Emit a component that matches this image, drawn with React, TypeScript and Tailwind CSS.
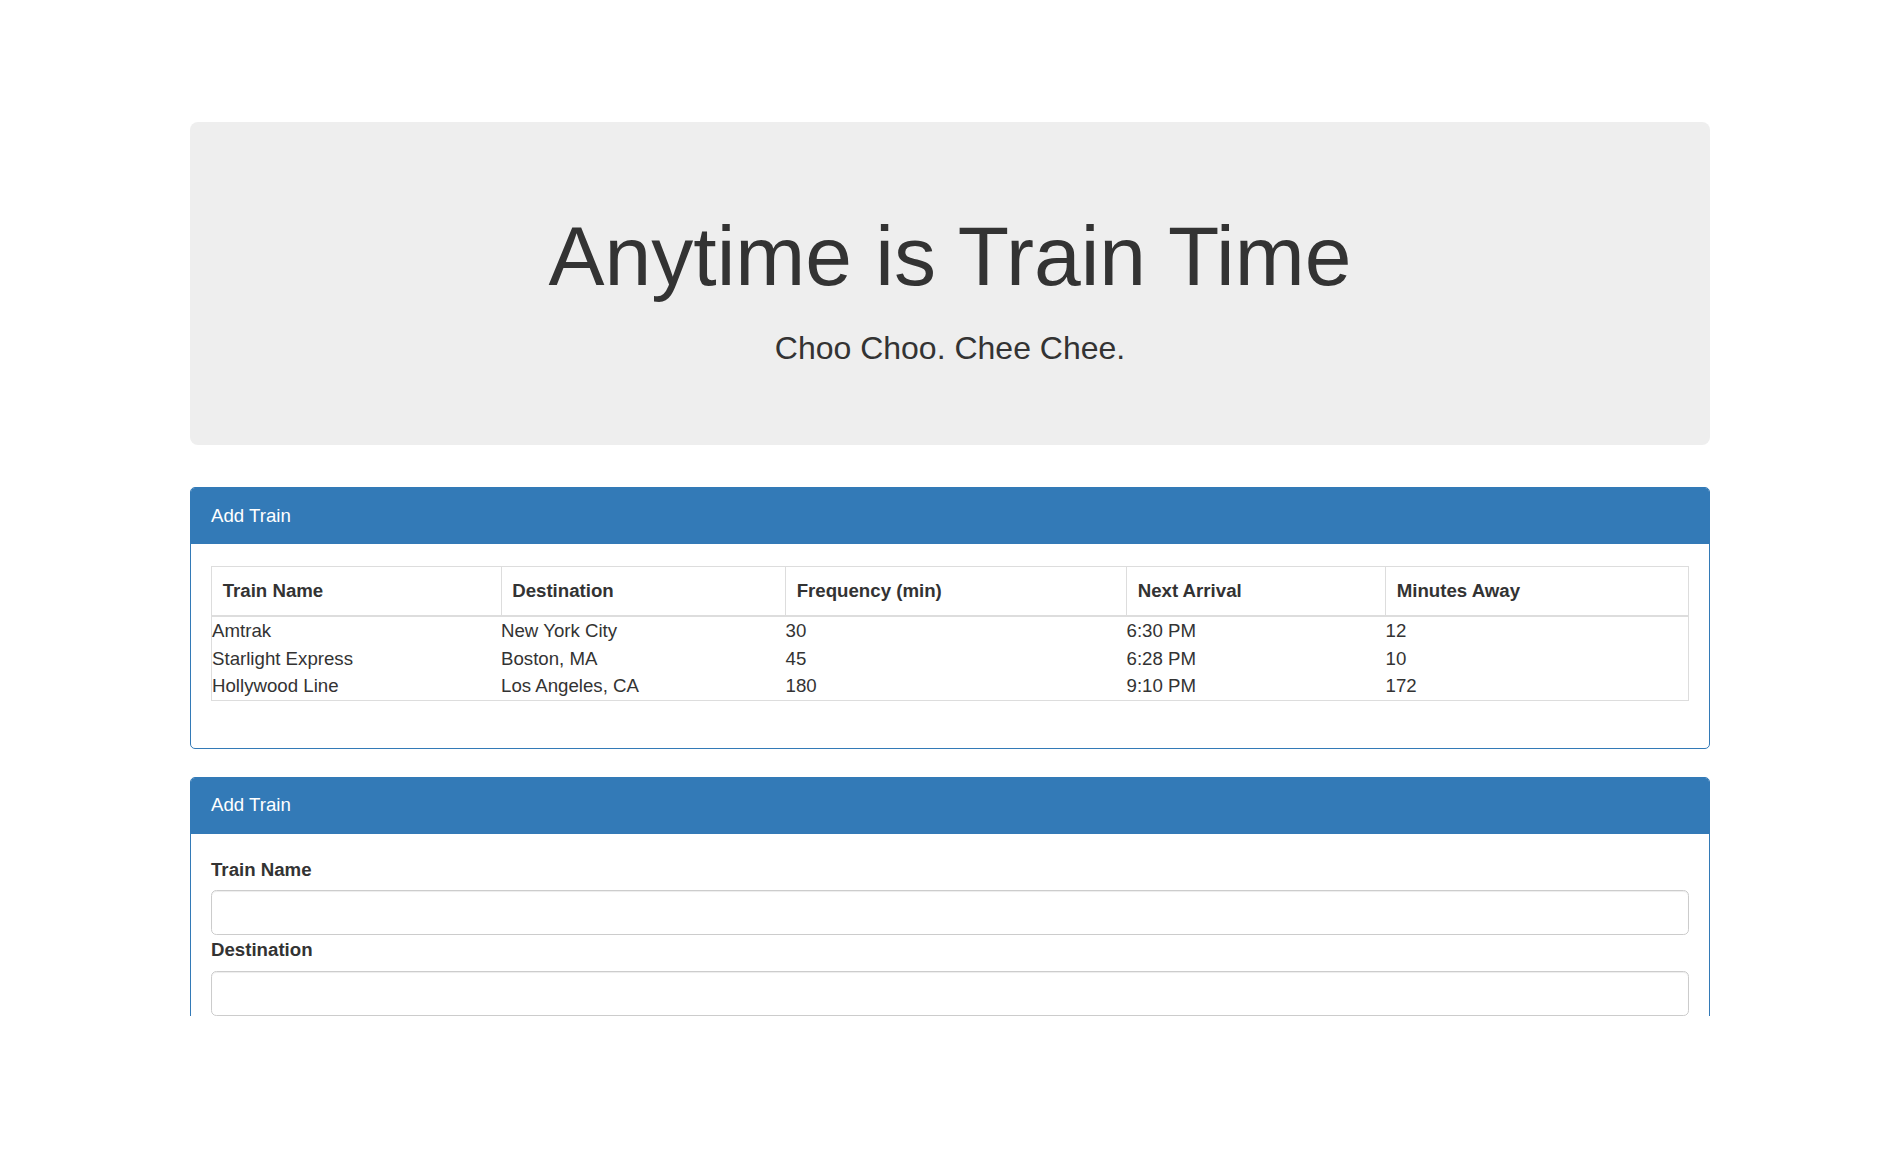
import React from "react";

const rows = [
  ["Amtrak", "New York City", "30", "6:30 PM", "12"],
  ["Starlight Express", "Boston, MA", "45", "6:28 PM", "10"],
  ["Hollywood Line", "Los Angeles, CA", "180", "9:10 PM", "172"],
];

const headers = ["Train Name", "Destination", "Frequency (min)", "Next Arrival", "Minutes Away"];

function PanelHeading() {
  return (
    <div className="h-[56px] bg-[#337ab7] px-[20px] flex items-center text-white text-[18.67px] leading-[26.67px]">
      Add Train
    </div>
  );
}

export default function App() {
  return (
    <div className="w-[1890px] h-[1172px] bg-white text-[#333] font-['Liberation_Sans',Arial,sans-serif] overflow-hidden">
      <div className="h-[1016px] overflow-hidden pt-[122px]">
        <div className="ml-[190px] w-[1520px]">
          {/* Jumbotron */}
          <div className="bg-[#eeeeee] rounded-[8px] pt-[64px] pb-[65px] text-center">
            <h1 className="mt-[24px] mb-[29px] text-[84px] leading-[1.1] font-normal">
              Anytime is Train Time
            </h1>
            <h3 className="mt-0 mb-[13.33px] text-[32px] leading-[1.1] font-normal">
              Choo Choo. Chee Chee.
            </h3>
          </div>

          {/* Panel 1: table */}
          <div className="mt-[42px] border border-[#337ab7] rounded-[5px] overflow-hidden bg-white">
            <PanelHeading />
            <div className="px-[20px] pt-[22px] pb-[20px]">
              <table className="w-full table-fixed border-collapse border border-[#dddddd] mb-[26.67px] text-[18.67px]">
                <colgroup>
                  <col className="w-[289.5px]" />
                  <col className="w-[284.5px]" />
                  <col className="w-[341px]" />
                  <col className="w-[259px]" />
                  <col className="w-[303px]" />
                </colgroup>
                <thead>
                  <tr>
                    {headers.map((h) => (
                      <th
                        key={h}
                        className="border border-[#dddddd] border-b-2 px-[10.67px] py-[10.67px] text-left font-bold leading-[26.67px]"
                      >
                        {h}
                      </th>
                    ))}
                  </tr>
                </thead>
                <tbody>
                  {rows.map((r) => (
                    <tr key={r[0]}>
                      {r.map((c, i) => (
                        <td key={i} className="p-0 leading-[27.7px] text-left">
                          {c}
                        </td>
                      ))}
                    </tr>
                  ))}
                </tbody>
              </table>
            </div>
          </div>

          {/* Panel 2: form */}
          <div className="mt-[28px] border border-[#337ab7] rounded-[5px] overflow-hidden bg-white">
            <PanelHeading />
            <div className="px-[20px] pt-[23px] pb-[20px]">
              <label className="block font-bold text-[18.67px] leading-[26.67px] mb-[6.67px]">
                Train Name
              </label>
              <input
                type="text"
                className="block w-full h-[45.33px] border border-[#cccccc] rounded-[5.33px] bg-white shadow-[inset_0_1px_1px_rgba(0,0,0,0.075)] px-[16px] text-[18.67px] outline-none"
              />
              <label className="block mt-[2px] font-bold text-[18.67px] leading-[26.67px] mb-[6.67px]">
                Destination
              </label>
              <input
                type="text"
                className="block w-full h-[45.33px] border border-[#cccccc] rounded-[5.33px] bg-white shadow-[inset_0_1px_1px_rgba(0,0,0,0.075)] px-[16px] text-[18.67px] outline-none"
              />
            </div>
          </div>
        </div>
      </div>
    </div>
  );
}
